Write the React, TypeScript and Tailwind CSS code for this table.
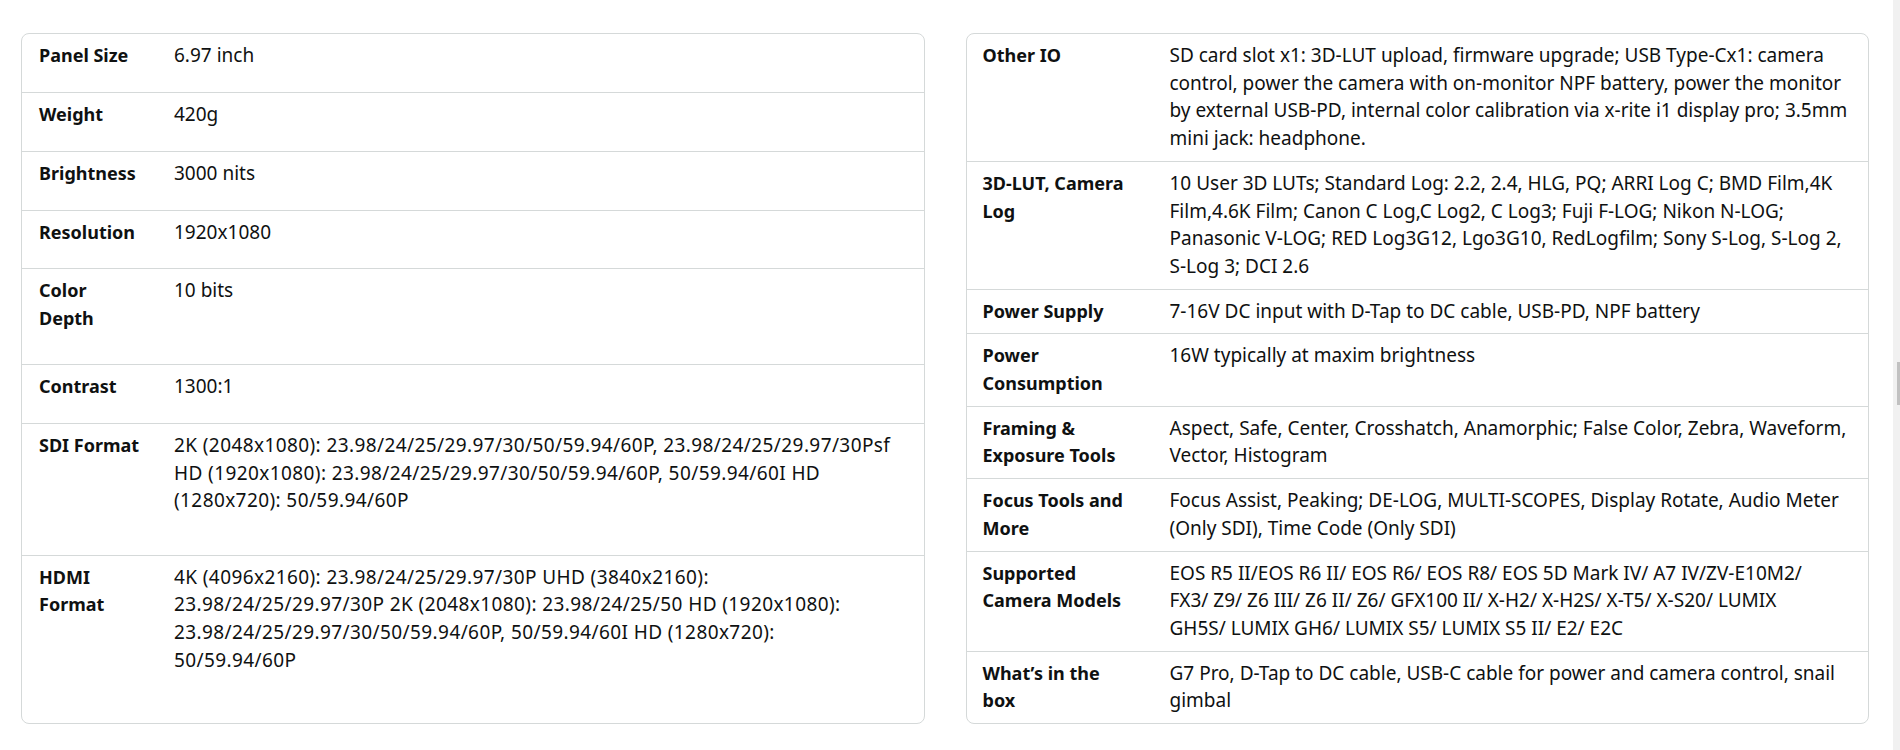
import React from "react";

type Row = { k: string[]; v: string[]; wide?: boolean };

const left: Row[] = [
  { k: ["Panel Size"], v: ["6.97 inch"] },
  { k: ["Weight"], v: ["420g"] },
  { k: ["Brightness"], v: ["3000 nits"] },
  { k: ["Resolution"], v: ["1920x1080"] },
  { k: ["Color", "Depth"], v: ["10 bits"] },
  { k: ["Contrast"], v: ["1300:1"] },
  {
    k: ["SDI Format"],
    wide: true,
    v: [
      "2K (2048x1080): 23.98/24/25/29.97/30/50/59.94/60P, 23.98/24/25/29.97/30Psf",
      "HD (1920x1080): 23.98/24/25/29.97/30/50/59.94/60P, 50/59.94/60I HD",
      "(1280x720): 50/59.94/60P",
    ],
  },
  {
    k: ["HDMI", "Format"],
    wide: true,
    v: [
      "4K (4096x2160): 23.98/24/25/29.97/30P UHD (3840x2160):",
      "23.98/24/25/29.97/30P 2K (2048x1080): 23.98/24/25/50 HD (1920x1080):",
      "23.98/24/25/29.97/30/50/59.94/60P, 50/59.94/60I HD (1280x720):",
      "50/59.94/60P",
    ],
  },
];

const right: Row[] = [
  {
    k: ["Other IO"],
    v: [
      "SD card slot x1: 3D-LUT upload, firmware upgrade; USB Type-Cx1: camera",
      "control, power the camera with on-monitor NPF battery, power the monitor",
      "by external USB-PD, internal color calibration via x-rite i1 display pro; 3.5mm",
      "mini jack: headphone.",
    ],
  },
  {
    k: ["3D-LUT, Camera", "Log"],
    v: [
      "10 User 3D LUTs; Standard Log: 2.2, 2.4, HLG, PQ; ARRI Log C; BMD Film,4K",
      "Film,4.6K Film; Canon C Log,C Log2, C Log3; Fuji F-LOG; Nikon N-LOG;",
      "Panasonic V-LOG; RED Log3G12, Lgo3G10, RedLogfilm; Sony S-Log, S-Log 2,",
      "S-Log 3; DCI 2.6",
    ],
  },
  {
    k: ["Power Supply"],
    v: ["7-16V DC input with D-Tap to DC cable, USB-PD, NPF battery"],
  },
  { k: ["Power", "Consumption"], v: ["16W typically at maxim brightness"] },
  {
    k: ["Framing &", "Exposure Tools"],
    v: [
      "Aspect, Safe, Center, Crosshatch, Anamorphic; False Color, Zebra, Waveform,",
      "Vector, Histogram",
    ],
  },
  {
    k: ["Focus Tools and", "More"],
    v: [
      "Focus Assist, Peaking; DE-LOG, MULTI-SCOPES, Display Rotate, Audio Meter",
      "(Only SDI), Time Code (Only SDI)",
    ],
  },
  {
    k: ["Supported", "Camera Models"],
    v: [
      "EOS R5 II/EOS R6 II/ EOS R6/ EOS R8/ EOS 5D Mark IV/ A7 IV/ZV-E10M2/",
      "FX3/ Z9/ Z6 III/ Z6 II/ Z6/ GFX100 II/ X-H2/ X-H2S/ X-T5/ X-S20/ LUMIX",
      "GH5S/ LUMIX GH6/ LUMIX S5/ LUMIX S5 II/ E2/ E2C",
    ],
  },
  {
    k: ["What\u2019s in the", "box"],
    v: [
      "G7 Pro, D-Tap to DC cable, USB-C cable for power and camera control, snail",
      "gimbal",
    ],
  },
];

function Lines({ lines }: { lines: string[] }) {
  return (
    <>
      {lines.map((l, i) => (
        <span key={i} className="block whitespace-nowrap">
          {l}
        </span>
      ))}
    </>
  );
}

function SpecTable({ rows, side }: { rows: Row[]; side: "left" | "right" }) {
  return (
    <div className="rounded-[8px] border border-[#d5d9d9] overflow-hidden bg-white">
      <table className="w-full h-full table-fixed">
        <colgroup>
          <col className={side === "left" ? "w-[136px]" : "w-[187px]"} />
          <col />
        </colgroup>
        <tbody>
          {rows.map((r, i) => (
            <tr
              key={i}
              className={i < rows.length - 1 ? "border-b border-[#d5d9d9]" : ""}
            >
              <td
                className={
                  side === "left"
                    ? "align-top py-2 pl-[17px] pr-[8px] font-bold text-[18px]"
                    : "align-top py-2 pl-[16px] pr-[8px] font-bold text-[18px]"
                }
              >
                <Lines lines={r.k} />
              </td>
              <td
                className={
                  r.wide
                    ? "align-top py-2 pl-[16px] pr-[8px] text-[19px] tracking-[0.4px]"
                    : "align-top py-2 pl-[16px] pr-[8px] text-[19px]"
                }
              >
                <Lines lines={r.v} />
              </td>
            </tr>
          ))}
        </tbody>
      </table>
    </div>
  );
}

export default function App() {
  return (
    <div
      className="flex min-h-[750px] w-full bg-white text-[#0f1111] leading-[27.7px]"
      style={{ fontFamily: '"Noto Sans", "Open Sans", Arial, sans-serif' }}
    >
      <div className="flex-1 pt-[33px] pl-[21px] pr-[24px]">
        <div className="grid grid-cols-2 gap-[41px] items-stretch">
          <SpecTable rows={left} side="left" />
          <SpecTable rows={right} side="right" />
        </div>
      </div>
      <div className="w-[7px] bg-[#f1f1f1] flex flex-col items-end">
        <div className="mt-[362px] w-[3px] h-[43px] bg-[#c1c1c1]" />
      </div>
    </div>
  );
}
